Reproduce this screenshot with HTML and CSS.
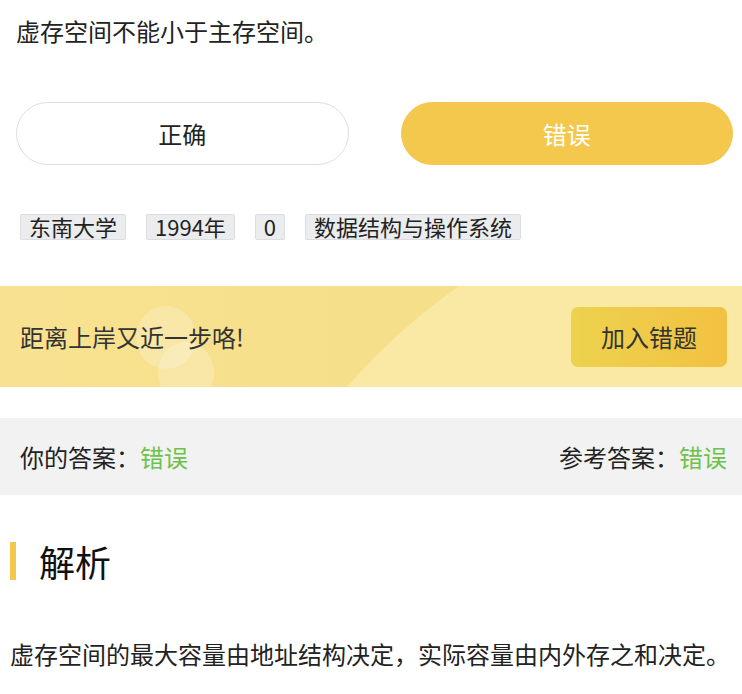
FILE: index.html
```html
<!doctype html>
<html lang="zh-CN">
<head>
  <meta charset="utf-8">
  <title>判断题</title>
  <link rel="stylesheet" href="styles.css">
</head>
<body>
  <!-- 题干 -->
  <div class="question">虚存空间不能小于主存空间。</div>

  <!-- 选项 -->
  <div class="options">
    <div class="option">正确</div>
    <div class="option is-chosen">错误</div>
  </div>

  <!-- 标签 -->
  <div class="tags">
    <span class="tag">东南大学</span>
    <span class="tag">1994年</span>
    <span class="tag">0</span>
    <span class="tag">数据结构与操作系统</span>
  </div>

  <!-- 提示条 -->
  <div class="banner">
    <span class="bubble bubble-a"></span>
    <span class="bubble bubble-b"></span>
    <span class="arc"></span>
    <div class="banner-text">距离上岸又近一步咯!</div>
    <div class="banner-btn">加入错题</div>
  </div>

  <!-- 答案 -->
  <div class="answers">
    <div>你的答案：<span class="right">错误</span></div>
    <div>参考答案：<span class="right">错误</span></div>
  </div>

  <!-- 解析 -->
  <h2 class="section-title">解析</h2>
  <p class="analysis">虚存空间的最大容量由地址结构决定，实际容量由内外存之和决定。</p>
</body>
</html>
```

FILE: styles.css
```css
/*----------------------------------------------
 * BASE
 *----------------------------------------------*/
html, body {
  margin: 0;
  padding: 0;
  background: #fff;
  color: #222;
  font-family: "Noto Sans CJK SC", "Noto Sans", sans-serif;
}

.question {
  padding: 13px 16px 0;
  font-size: 24px;
  line-height: 36px;
}

/*----------------------------------------------
 * OPTIONS
 *----------------------------------------------*/
.options {
  display: flex;
  gap: 52px;
  margin-top: 53px;
  padding: 0 9px 0 16px;
}

.option {
  flex: 1;
  height: 63px;
  box-sizing: border-box;
  border: 1px solid #dedede;
  border-radius: 32px;
  display: flex;
  align-items: center;
  justify-content: center;
  font-size: 24px;
  color: #222;
}

.option.is-chosen {
  background: #f4c74d;
  border-color: #f4c74d;
  color: #fff;
}

/*----------------------------------------------
 * TAGS
 *----------------------------------------------*/
.tags {
  display: flex;
  gap: 20px;
  margin-top: 49px;
  padding-left: 20px;
}

.tag {
  height: 26px;
  box-sizing: border-box;
  padding: 0 8px;
  border: 1px solid #dcdde0;
  border-radius: 2px;
  background: #ebecee;
  font-size: 22px;
  line-height: 23px;
  color: #222;
}

/*----------------------------------------------
 * BANNER
 *----------------------------------------------*/
.banner {
  position: relative;
  overflow: hidden;
  margin-top: 46px;
  height: 101px;
  display: flex;
  align-items: center;
  justify-content: space-between;
  padding: 0 15px 0 20px;
  background: linear-gradient(90deg, #f8e291 0%, #f6df8a 55%, #f8e59a 100%);
}

.bubble {
  position: absolute;
  border-radius: 50%;
  background: rgba(255, 255, 255, 0.22);
}

.bubble-a { left: 136px; top: 20px; width: 60px; height: 63px; }
.bubble-b { left: 158px; top: 56px; width: 56px; height: 62px; }

.arc {
  position: absolute;
  left: 192px;
  top: -114px;
  width: 1256px;
  height: 1256px;
  border-radius: 50%;
  background: #f9e9a4;
}

.banner-text,
.banner-btn {
  position: relative;
}

.banner-text {
  font-size: 24px;
  color: #333;
}

.banner-btn {
  width: 156px;
  height: 60px;
  border-radius: 7px;
  background: linear-gradient(90deg, #ecd24d, #f3c142);
  display: flex;
  align-items: center;
  justify-content: center;
  font-size: 24px;
  color: #333;
}

/*----------------------------------------------
 * ANSWERS
 *----------------------------------------------*/
.answers {
  margin-top: 31px;
  height: 77px;
  display: flex;
  align-items: center;
  justify-content: space-between;
  padding: 0 15px 0 20px;
  background: #f2f2f2;
  font-size: 24px;
  line-height: 30px;
  color: #222;
}

.right {
  color: #6dc24b;
}

/*----------------------------------------------
 * ANALYSIS
 *----------------------------------------------*/
.section-title {
  margin: 47px 0 0 10px;
  padding-left: 23px;
  border-left: 6px solid #f4c74d;
  height: 38px;
  line-height: 38px;
  font-size: 36px;
  font-weight: normal;
  color: #111;
}

.analysis {
  margin: 56px 0 0;
  padding: 0 10px;
  font-size: 24px;
  line-height: 36px;
  color: #222;
}
```
